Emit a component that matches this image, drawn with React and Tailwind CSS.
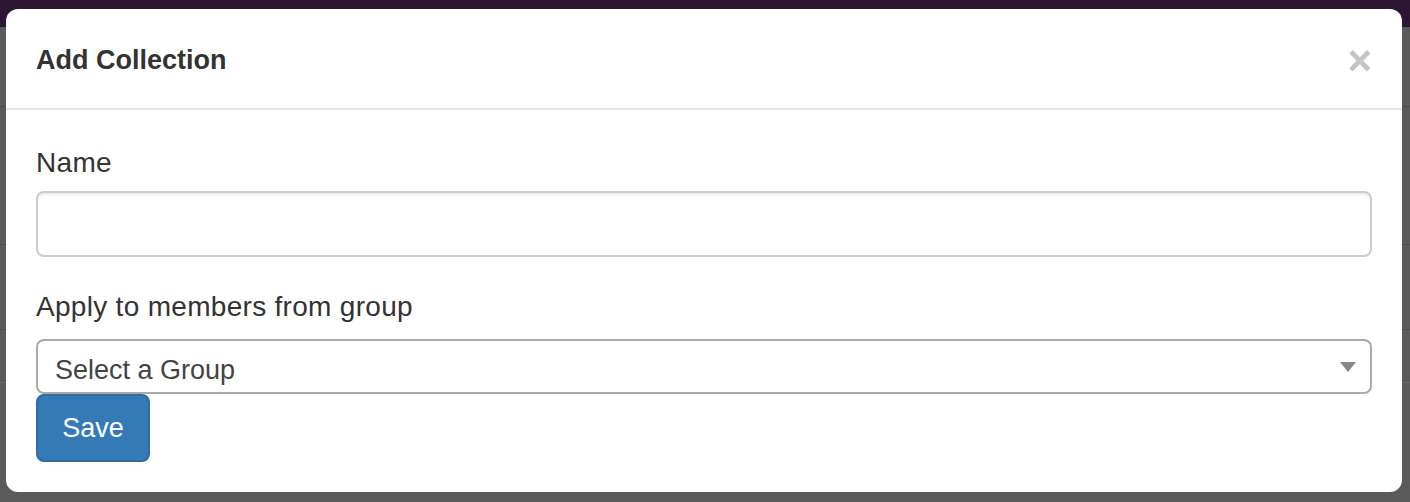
export default function App() {
  return (
    <div
      className="relative h-[502px] w-[1410px] overflow-hidden bg-[#5a5a5a]"
      style={{ fontFamily: '"Liberation Sans", Arial, sans-serif' }}
    >
      {/* page behind the backdrop */}
      <div className="h-[27px] bg-[#2c1632]" />
      <div className="h-[80px] border-b border-[#4e4e4e]" />
      <div className="h-[138px] border-b border-[#4e4e4e]" />
      <div className="h-[85px] border-b border-[#4e4e4e]" />
      <div className="h-[53px] border-b border-[#686868]" />

      {/* modal */}
      <div className="absolute left-[6px] right-[8px] top-[9px] h-[483px] rounded-[12px] bg-white text-[#333]">
        <div className="flex h-[101px] items-center justify-between border-b-2 border-[#e5e5e5] px-[30px] pt-[4px]">
          <h4 className="text-[27px] font-bold leading-none">Add Collection</h4>
          <button className="text-[42px] font-bold leading-none text-[#c4c4c4]">×</button>
        </div>

        <div className="px-[30px] pt-[34px]">
          <div className="mb-[9px]">
            <label className="block text-[28px] leading-[38px] tracking-[0.3px]">Name</label>
          </div>
          <input
            type="text"
            className="block h-[66px] w-full rounded-[8px] border-2 border-[#ccc] shadow-[inset_0_2px_2px_rgba(0,0,0,0.075)] outline-none"
          />

          <div className="mt-[31px] mb-[13px]">
            <label className="block text-[28px] leading-[38px] tracking-[0.3px]">Apply to members from group</label>
          </div>
          <div className="flex h-[55px] w-full items-center justify-between rounded-[8px] border-2 border-[#aaa] pl-[17px] pr-[12px]">
            <span className="pt-[7px] text-[27px] leading-none text-[#444]">Select a Group</span>
            <span className="mr-[2px] h-0 w-0 border-x-[8px] border-t-[10px] border-x-transparent border-t-[#888]" />
          </div>

          <button className="h-[68px] w-[114px] rounded-[8px] border-2 border-[#2e6da4] bg-[#337ab7] text-[27px] text-white">
            Save
          </button>
        </div>
      </div>
    </div>
  );
}
